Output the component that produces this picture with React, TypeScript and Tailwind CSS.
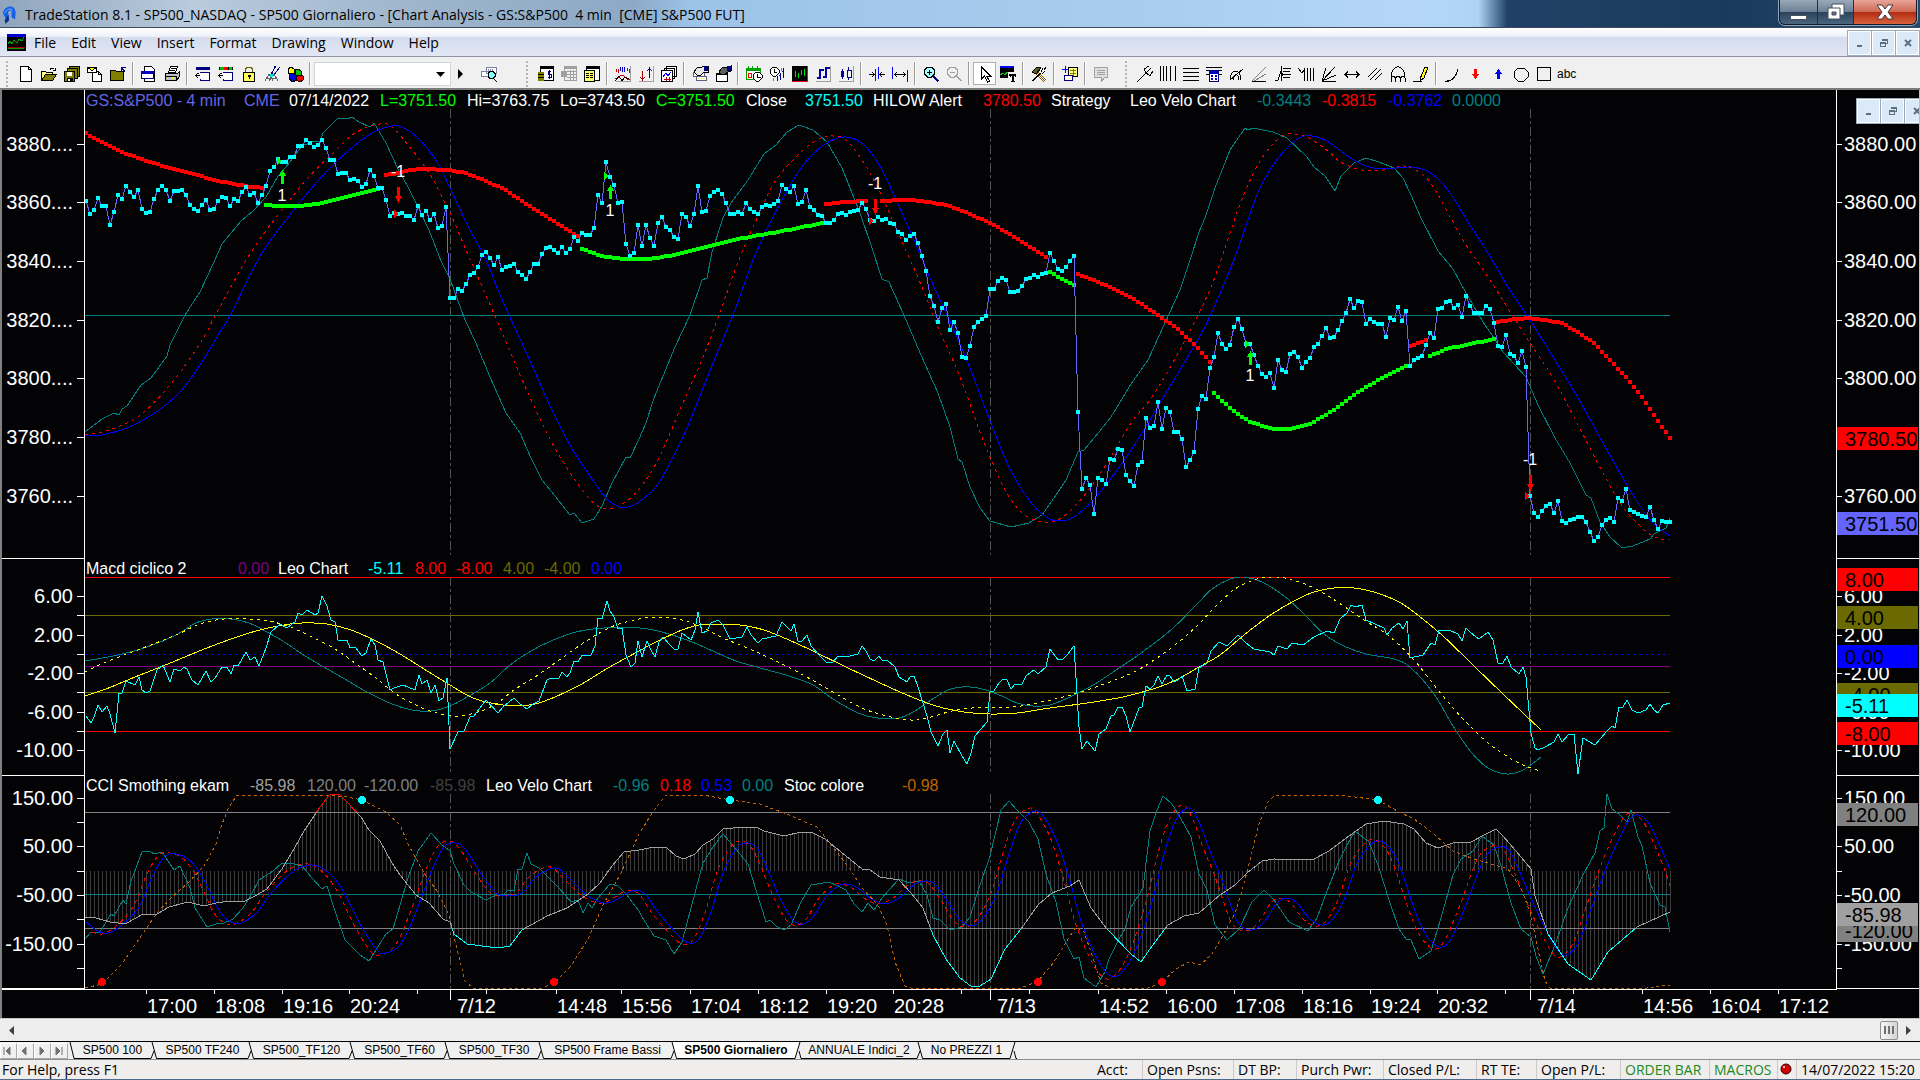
import { useState } from 'react';

// ---------------------------------------------------------------------------
// Icons: 16x16 grids, each layer is [path, fill, stroke]
// ---------------------------------------------------------------------------

type Layer = [string, string, string?];

const N = 'none';
const K = '#000';

const ICONS: Record<string, Layer[]> = {
  new: [['M2.5 .5h8l3 3v12h-11z', '#fff', K], ['M10.5 .5v3h3', N, K]],
  open: [
    ['M.5 14.5v-9h4l1 1h6v2', '#ffff80', K],
    ['M.5 14.5l4-6h11l-4 6z', '#808000', K],
    ['M9 3.5c1-2 3-2 4.500 0M14.500 1.500v3h-3', N, K],
  ],
  saveAll: [
    ['M5.500 .5h10v10h-10z', '#808000', K],
    ['M3.500 2.500h10v10h-10z', '#808000', K],
    ['M.5 5.500h10v10h-10z', '#808000', K],
    ['M3 6h5v4h-5z', '#fff'],
    ['M3 12h6v4h-6z', K],
    ['M4 13h2v2h-2z', '#fff'],
  ],
  mail: [
    ['M5.500 5.500h6l3 3v7h-9z', '#fff', K],
    ['M11.500 5.500v3h3', N, K],
    ['M.5 1.500h9v5h-9z', '#fff', K],
    ['M.5 1.500l4.500 3l4.500-3', '#ffff00', K],
  ],
  folder: [
    ['M.5 14.500v-10h5l1 1h7v9z', '#808000', K],
    ['M15 6l-3-4M11.500 5v-4h4', N, '#000080'],
  ],
  preview: [
    ['M3.500 .5h7l3 3v12h-10z', '#fff', K],
    ['M.5 5.500h12v7h-12z', '#fff', '#000080'],
    ['M1 5h12v3h-12z', '#0000c0'],
  ],
  print: [
    ['M4.500 6.500l2-6h7l-2 6z', '#fff', K],
    ['M7 2.500h5M6 4.500h5', N, K],
    ['M1.500 7.500h12l2-2v5l-3 4h-11z', '#c0c0c0', K],
    ['M1.500 10.500h11v4', N, K],
    ['M8 11h2v2h-2z', '#ffff00'],
  ],
  insertBar: [
    ['M1 1h14v3h-14z', '#000080'],
    ['M5.500 14.500h9v-8h-10M5 14.500v-2', '#fff', '#000080'],
    ['M0 9.500h5M3.500 7l-3 2.500l3 3', N, K],
  ],
  insertStudy: [
    ['M1 1h14v3h-14z', K],
    ['M2 1h4v3h-4zM11 1h3v3h-3z', '#00c000'],
    ['M6 1h4v3h-4z', '#f00'],
    ['M5.500 14.500h9v-8h-10M5 14.500v-2', '#fff', '#000080'],
    ['M0 9.500h5M3.500 7l-3 2.500l3 3', N, K],
  ],
  lock: [
    ['M4.500 7v-4l2-2h3l2 2v4', N, '#606000'],
    ['M2.500 6.500h11v9h-11z', '#ffff60', K],
    ['M7 9h3v2h-1v2h-1v-2h-1z', K],
  ],
  satellite: [
    ['M8 8l3-8M10 9l6-8M7 8l5-8', N, '#000080'],
    ['M1 15l4-7h5l4 7M3 12h9M5 8l4 7M10 8l-5 7', N, '#606060'],
    ['M6 8h3v3h-3z', '#00e0e0'],
  ],
  cubes: [
    ['M1 3l3-2l3 2v4l-3 1l-3-1z', '#ffff00', K],
    ['M8 4l3-1l3 2v4l-6 1z', '#00c000', K],
    ['M2 8l4-1l3 2v5l-3 2l-4-3z', '#0000e0', K],
    ['M9 11l3-2l4 1v4l-3 2l-4-2z', '#f00000', K],
  ],
  find: [
    ['M0 5.500h8v5h-8zM5 1.500h10v6h-10z', '#fff', '#8080a0'],
    ['M7.500 3v3M9.500 3v3M11.500 3v3', N, '#8080a0'],
    ['M7 7.500l2-2h3l2 2v3l-2 2h-3l-2-2z', '#80ffff', K],
    ['M12 12l4 4', N, K],
  ],
  money: [
    ['M2.500 .5h13v14h-13z', '#fff', K],
    ['M2 0h14v3h-14z', K],
    ['M0 6h6v9h-6z', '#808000'],
    ['M0 8.500h6M0 11.500h6', N, K],
    ['M13 5.500h-3v3h3v3h-3M11.500 4v9', N, '#000080'],
  ],
  greyTable: [
    ['M3 0h13v3h-13zM0 5h6v6h-6z', '#a0a0a0'],
    ['M3.500 .5h12v14h-12zM6 5.500h9M6 8.500h9M6 11.500h9M9.500 4v10M12.500 4v10', N, '#a0a0a0'],
  ],
  table: [
    ['M2.500 .5h13v14h-13z', '#fff', K],
    ['M2 0h14v3h-14z', K],
    ['M.5 4.500h10v11h-10z', '#ffff60', K],
    ['M2 7.500h3M6 7.500h3M2 9.500h3M6 9.500h3M2 11.500h3M6 11.500h3', N, K],
  ],
  oscillator: [
    ['M15.500 0v15.500h-15', N, '#a0a0a0'],
    ['M1.500 6v-3M3.500 7v-4M12.500 5v-3M14.500 7v-4', N, '#c00000'],
    ['M5.500 5v-4M7.500 6v-5M9.500 6v-5', N, '#0000c0'],
    ['M0 13l3-1l3-3l3 1l3 3h3', N, '#c00000'],
    ['M0 15l4-5l3 5l3-4l4 2', N, K],
  ],
  upDown: [
    ['M15.500 0v15.500h-15', N, '#a0a0a0'],
    ['M4.500 5v9M2.500 11l2 3l2-3', N, '#a00000'],
    ['M11.500 12v-10M9.500 5l2-3l2 3', N, '#000080'],
  ],
  charts: [
    ['M5.500 .5h10v10h-10zM3.500 2.500h10v10h-10z', '#fff', K],
    ['M.5 4.500h11v11h-11z', '#fff', K],
    ['M2 11l3-4l2 3l3-4', N, '#0000ff'],
    ['M5.500 11v4M8.500 11v4M3 13.500h7', N, '#c00000'],
  ],
  handBar: [
    ['M1.500 6.500h11v4h-11zM4.500 10.500h10v4h-10z', '#fff', '#606080'],
    ['M2 6l3-4l5-1l4-1h2v6h-4l-3 3h-4z', '#e8e8e8', K],
    ['M12 0h4v5h-4z', '#000080'],
    ['M5 12h8v1h-8z', '#ffff80'],
  ],
  handPage: [
    ['M1.500 7.500h11v8h-11z', '#fff', K],
    ['M1 7h12v2h-12z', K],
    ['M4 6l3-4l5-1l4-1v5l-3 1l-3 2h-4z', '#606060', K],
    ['M12 0h4v5h-4z', '#000080'],
  ],
  calendar: [
    ['M.5 2.500h14v11h-14z', '#fff', '#00a000'],
    ['M0 2h15v3h-15zM2 0h1v3h-1zM6 0h1v3h-1zM11 0h1v3h-1z', '#00a000'],
    ['M2 7h3v4h-3z', N, '#f00'],
    ['M7 9l3-3h3l3 3v3l-3 3h-3l-3-3z', '#fff', K],
    ['M11.500 8v3h3', N, K],
  ],
  clockBars: [
    ['M1 4l3-3h3l3 3v3l-3 3h-3l-3-3z', '#fff', K],
    ['M5.500 3v3h2', N, K],
    ['M8.500 10v5M11.500 7v7M14.500 2v10M10 9.500h2M13 5.500h2', N, '#0000a0'],
    ['M4.500 12v3M12.500 2v3', N, '#808080'],
  ],
  blackChart: [
    ['M0 0h16v16h-16z', K],
    ['M0 15.500h16M15.500 0v16', N, '#f00'],
    ['M3.500 5v6M6.500 7v5M9.500 4v5M12.500 3v7', N, '#00e000'],
  ],
  ohlc: [
    ['M15.500 0v15.500h-15', N, '#a0a0a0'],
    ['M4 3h2v10h-2zM2 11h2v2h-2zM6 3h3v2h-3zM10 1h2v11h-2zM8 10h2v2h-2zM12 1h3v2h-3z', '#0000a0'],
  ],
  candle: [
    ['M15.500 0v15.500h-15', N, '#a0a0a0'],
    ['M3 5h3v6h-3z', '#0000a0'],
    ['M4.500 3v10M10.500 1v3M10.500 11v3M9 4h4v7h-4z', N, '#0000a0'],
  ],
  squeeze: [
    ['M0 8.500h5M3 6l2.500 2.500l-2.500 2.500M16 8.500h-5M13 6l-2.500 2.500l2.500 2.500', N, K],
    ['M6.500 3v12M9.500 1v12', N, '#0000ff'],
  ],
  expand: [
    ['M3 8.500h11M5 6l-2.500 2.500l2.500 2.500M11 6l2.500 2.500l-2.500 2.500', N, K],
    ['M.5 1v12M15.500 4v12', N, '#0000ff'],
  ],
  zoomIn: [
    ['M1.500 4l3-3h4l3 3v4l-3 3h-4l-3-3z', '#a0ffff', K],
    ['M6.500 3.500v5M4 6h5', N, K],
    ['M10 10l5 5M11 10l5 5M10 11l5 5', N, '#000080'],
  ],
  zoomOut: [
    ['M1.500 4l3-3h4l3 3v4l-3 3h-4l-3-3z', N, '#a0a0a0'],
    ['M4 6.500h5M10 10l5 5M11 10l5 5', N, '#a0a0a0'],
  ],
  pointer: [['M4.500 1v12l3-3l3 6l2-1l-3-5h4z', '#fff', K]],
  chartText: [
    ['M0 1h14v11h-14z', K],
    ['M0 0h14v2h-14z', '#0000ff'],
    ['M0 9l3-2l2 2l2-3l3 2', N, '#00d000'],
    ['M8 6h8v10h-8z', '#f0f0f0'],
    ['M9 8h7v3h-1v-1h-1v5h1v1h-4v-1h1v-5h-1v1h-1z', K],
  ],
  tools: [
    ['M14 15l-9-9M13 16l-9-9M15 14l-9-9', N, '#806000'],
    ['M1 6l5-5l4 1l-5 6z', '#606020', K],
    ['M1 15l8-8M2 15l8-8M10 6l2-4M14 5l-3 3M15 1l-2 3', N, K],
  ],
  addWindow: [
    ['M3.500 0v7M0 3.500h7', N, '#0000ff'],
    ['M6.500 1.500h9v9h-9z', '#ffff80', K],
    ['M8 4.500h6M8 7.500h6M11.500 3v7', N, '#808000'],
    ['M2.500 9.500h8v5h-8z', '#fff', '#000080'],
  ],
  note: [
    ['M1.500 1.500h13v10h-3l-3 4v-4h-7z', '#e0e0e0', '#a0a0a0'],
    ['M4 4.500h8M4 6.500h8M4 8.500h8', N, '#a0a0a0'],
  ],
  pitchfork: [['M0 16l9-9M9 7l-2-4l5-3M9 7l4 3l3-5M4 12l10-10', N, K]],
  vLines: [['M.5 0v15M3.500 0v15M6.500 0v15M10.500 0v15M15.500 0v15', N, K]],
  hLines: [['M0 2.500h16M0 6.500h16M0 10.500h16M0 14.500h16', N, K]],
  calc: [
    ['M0 1.500h16M0 4.500h16M0 8.500h16', N, K],
    ['M3.500 4.500h9v11h-9z', '#fff', '#000080'],
    ['M4 5h8v3h-8zM5 9h2v2h-2zM9 9h2v2h-2zM5 12h2v2h-2zM9 12h2v2h-2z', '#0000c0'],
  ],
  arcs: [['M1 14c0-12 11-12 11 0M4 14c0-7 6-7 6 0M1 14l13-11', N, K]],
  fanDots: [['M0 15.500h14', N, K], ['M0 15l14-14M2 15l12-7', N, '#808080']],
  retrace: [['M0 15l3-1l3-9l2 5M6.500 0v15M8 2.500h8M8 5.500h7M8 8.500h8M8 11.500h7', N, K]],
  timeLines: [['M0 2l4 5l3-4M6.500 2v13M9.500 2v13M12.500 2v13M15.500 2v13', N, K]],
  fan: [['M1 15.500h14M1 15l13-14M1 15l14-6M1 15l4-13', N, K]],
  hArrow: [['M1 8.500h14M4 5.500l-3 3l3 3M12 5.500l3 3l-3 3', N, K]],
  channel: [['M1 11l9-9M3 14l11-11M8 14l7-7', N, K]],
  cycles: [['M1 12c0-15 14-15 14 0M1 16v-4c2-2 4-2 4 0v4M5 12c2-2 5-2 5 0v4M10 12c2-2 5-2 5 0v4', N, K]],
  pencil: [['M7 13l5-12h3l-4 11l-4 3z', '#ffff00', K], ['M0 15.500h9', N, K]],
  curve: [['M3 15c5 0 10-5 11-12M1 15h4', N, K]],
  down: [['M7 3h3v5h2l-3.500 5l-3.500-5h2z', '#ff0000']],
  up: [['M7 13h3v-5h2l-3.500-5l-3.500 5h2z', '#0000ff']],
  circle: [['M1 6l4-4h6l4 4v5l-4 4h-6l-4-4z', N, K]],
  rect: [['M1.500 1.500h13v13h-13z', N, K]],
};

function Icon({ name }: { name: string }) {
  return (
    <svg viewBox="0 0 16 16" className="h-4 w-4 overflow-visible" shapeRendering="crispEdges" aria-hidden="true">
      {ICONS[name].map(([d, fill, stroke], i) => (
        <path key={i} d={d} fill={fill} stroke={stroke ?? 'none'} />
      ))}
    </svg>
  );
}

function ToolButton({ name, active }: { name: string; active?: boolean }) {
  return (
    <button
      aria-label={name}
      className={
        active
          ? 'flex h-[23px] w-[23px] shrink-0 items-center justify-center border border-[#b0b0b0] bg-white'
          : 'flex h-[23px] w-[23px] shrink-0 items-center justify-center'
      }
    >
      <Icon name={name} />
    </button>
  );
}

const Sep = () => <span className="mx-[3px] h-[23px] w-0.5 shrink-0 border-l border-[#9a9a9a] bg-white" />;
const Grip = () => <span className="mr-1 h-[26px] w-1 shrink-0 border-l-2 border-dotted border-[#b4b4b4]" />;

function ToolGroup({ items }: { items: string[] }) {
  return (
    <>
      {items.map((name, i) =>
        name === '|' ? <Sep key={i} /> : <ToolButton key={i} name={name} active={name === 'pointer'} />
      )}
    </>
  );
}

const FILE_TOOLS = ['new', 'open', 'saveAll', 'mail', 'folder', '|', 'preview', 'print', '|', 'insertBar', 'insertStudy', 'lock', 'satellite', 'cubes', '|'];
const CHART_TOOLS = [
  'money', 'greyTable', 'table', '|', 'oscillator', 'upDown', 'charts', '|', 'handBar', 'handPage', '|',
  'calendar', 'clockBars', 'blackChart', 'ohlc', 'candle', '|', 'squeeze', 'expand', '|', 'zoomIn', 'zoomOut', '|',
  'pointer', 'chartText', '|', 'tools', '|', 'addWindow', '|', 'note',
];
const DRAW_TOOLS = [
  'pitchfork', 'vLines', 'hLines', 'calc', 'arcs', 'fanDots', 'retrace', 'timeLines', 'fan', 'hArrow', 'channel',
  'cycles', 'pencil', '|', 'curve', 'down', 'up', 'circle', 'rect',
];

// ---------------------------------------------------------------------------
// Chart data
// ---------------------------------------------------------------------------

const FIRST_X = 86;
const BAR = 4;

const CLOSES = [
  111, 124, 120, 108, 116, 116, 135, 122, 105, 109, 96, 102, 107, 100, 119, 123, 122, 109, 100, 96,
  100, 111, 101, 101, 100, 105, 115, 119, 121, 115, 110, 120, 119, 111, 107, 108, 116, 109, 111, 102,
  97, 105, 103, 113, 105, 96, 81, 77, 69, 72, 72, 67, 67, 56, 56, 50, 53, 57, 55, 50,
  58, 70, 70, 84, 83, 83, 90, 89, 91, 97, 94, 80, 86, 98, 98, 110, 126, 123, 124, 123,
  126, 126, 130, 116, 125, 121, 130, 124, 138, 136, 117, 208, 208, 199, 201, 194, 185, 183, 177, 165,
  162, 168, 175, 167, 180, 177, 176, 174, 182, 185, 189, 182, 174, 174, 164, 158, 157, 160, 163, 157,
  163, 159, 147, 151, 143, 145, 145, 138, 105, 113, 72, 87, 95, 113, 112, 154, 166, 163, 135, 156,
  135, 148, 156, 133, 127, 137, 140, 147, 149, 124, 127, 136, 124, 96, 122, 121, 106, 102, 100, 104,
  113, 124, 124, 122, 124, 113, 119, 122, 124, 117, 115, 116, 114, 111, 95, 99, 102, 96, 114, 112,
  100, 117, 120, 125, 126, 133, 133, 130, 124, 123, 125, 122, 121, 120, 113, 119, 130, 131, 127, 130,
  129, 133, 134, 142, 144, 150, 146, 144, 153, 166, 181, 206, 216, 232, 218, 214, 240, 232, 243, 267,
  268, 256, 237, 232, 229, 226, 199, 199, 191, 188, 190, 202, 202, 201, 196, 189, 188, 185, 187, 184,
  183, 163, 171, 179, 181, 177, 171, 166, 322, 399, 388, 395, 424, 388, 390, 394, 369, 370, 359, 360,
  385, 391, 396, 375, 372, 328, 338, 336, 312, 339, 318, 322, 342, 342, 349, 377, 370, 362, 319, 306,
  309, 278, 267, 243, 254, 259, 255, 237, 229, 239, 254, 254, 265, 276, 284, 287, 283, 298, 270, 280,
  282, 264, 262, 267, 278, 272, 268, 257, 254, 246, 238, 248, 247, 240, 231, 223, 209, 218, 211, 212,
  234, 229, 232, 234, 234, 247, 228, 230, 217, 231, 221, 276, 270, 268, 266, 255, 243, 248, 219, 218,
  212, 211, 218, 215, 227, 206, 216, 223, 223, 223, 216, 219, 233, 256, 257, 245, 264, 266, 273, 261,
  277, 406, 423, 427, 421, 416, 414, 423, 411, 431, 433, 430, 429, 427, 427, 432, 442, 451, 447, 435,
  430, 428, 432, 408, 411, 399, 420, 422, 424, 426, 427, 417, 430, 439, 431, 432, 432,
];

const HILOW_RED = [
  '86,43 94,48 114,58 127,64 147,71 163,76 186,82 204,87 224,92 245,96 264,98',
  '386,85 398,83 410,80 424,79 450,80 466,83 486,91 506,100 526,114 546,126 570,141 578,146',
  '826,114 842,112 866,111',
  '882,111 898,110 914,110 930,112 946,115 966,122 990,133 1010,144 1026,154 1046,167',
  '1078,184 1094,190 1114,199 1134,209 1158,225 1178,239 1198,258 1210,272',
  '1410,256 1426,250',
  '1498,232 1514,229 1530,228 1546,230 1562,233 1578,242 1594,253 1610,270 1626,287 1642,307 1658,331 1670,348',
];
const HILOW_GREEN = [
  '266,115 282,116 298,116 322,113 350,106 378,99',
  '582,159 602,166 622,169 642,169 658,168 682,163 710,156 738,149 766,144 798,138 822,133',
  '1050,182 1062,189 1074,195',
  '1214,303 1222,311 1234,321 1250,332 1274,339 1290,339 1310,334 1334,320 1358,302 1382,288 1406,276',
  '1430,266 1446,259 1466,255 1494,249',
];

const VELO_TEAL =
  '85,342 102,329 114,323 119,325 122,319 127,316 141,295 151,288 167,266 170,255 185,225 200,202 214,172 222,154 231,143 241,131 253,121 266,107 278,86 286,77 302,56 314,51 320,52 323,43 338,28 347,29 352,27 359,32 370,37 374,33 386,53 398,79 408,97 418,117 429,140 441,171 450,189 465,230 476,253 490,287 506,323 520,343 531,368 542,390 555,406 570,425 574,423 582,433 594,429 602,416 612,393 626,367 630,368 639,349 646,333 654,308 675,257 690,225 702,190 707,188 712,162 723,128 731,113 748,90 764,64 776,55 787,42 799,35 813,40 827,52 842,78 860,123 872,158 882,189 889,192 903,223 921,265 938,303 950,337 958,369 962,372 970,397 980,418 990,431 1011,437 1029,433 1042,425 1056,405 1066,390 1078,362 1084,360 1099,342 1111,327 1131,294 1148,270 1164,235 1180,200 1191,167 1199,142 1205,128 1215,98 1230,60 1245,38 1248,40 1253,38 1273,42 1287,48 1307,67 1314,77 1325,86 1335,101 1341,86 1354,73 1366,68 1379,72 1394,78 1403,88 1411,105 1421,128 1438,161 1453,179 1466,203 1483,232 1494,248 1503,262 1526,287 1538,315 1555,348 1570,373 1586,405 1591,408 1600,432 1610,447 1622,458 1633,456 1650,449 1654,444 1666,438 1670,428';
const VELO_BLUE =
  '85,346 102,345 127,338 143,330 159,320 180,302 200,275 220,242 231,224 249,187 265,158 286,130 310,100 335,73 359,52 376,41 392,36 402,37 418,48 437,72 450,98 469,138 486,170 498,200 509,225 531,273 551,318 571,357 588,383 606,408 620,417 631,416 639,412 656,397 670,373 687,338 711,278 733,225 756,163 782,110 801,78 821,57 838,48 852,48 866,57 882,80 911,143 931,190 948,227 968,273 989,328 1009,377 1029,410 1046,427 1060,431 1074,427 1095,408 1123,372 1148,333 1172,293 1199,248 1212,222 1235,167 1259,100 1279,67 1299,48 1312,46 1327,51 1349,67 1366,76 1384,79 1411,77 1429,82 1448,100 1468,132 1488,163 1508,197 1528,227 1553,267 1578,308 1608,362 1633,405 1652,432 1670,446';
const VELO_RED =
  '85,345 106,341 127,333 143,323 163,303 184,277 204,247 216,224 245,172 265,142 286,115 306,90 331,65 355,43 380,34 392,37 408,55 429,83 450,123 469,167 495,226 518,280 539,327 559,365 580,397 596,415 610,419 624,413 639,399 658,370 682,315 703,267 719,225 740,167 760,122 776,90 801,62 821,48 833,46 846,50 862,70 880,102 899,145 919,190 938,237 960,287 980,342 990,367 1005,400 1021,422 1038,431 1052,432 1068,423 1087,402 1107,373 1131,333 1152,307 1176,267 1199,223 1215,187 1239,117 1259,73 1279,48 1294,44 1309,48 1329,62 1339,71 1354,78 1371,81 1389,79 1404,76 1419,82 1434,98 1463,150 1488,187 1511,223 1528,250 1553,288 1578,335 1603,383 1623,417 1642,438 1657,448 1670,450';

const MACD_CYAN =
  '86,166 91,173 94,167 98,155 102,162 107,156 110,164 115,183 119,143 122,143 126,131 135,135 139,127 142,140 146,143 150,141 157,120 163,115 170,132 174,119 180,121 184,117 187,119 192,130 198,135 206,121 211,132 215,128 222,117 227,117 231,124 234,115 238,116 246,102 250,110 255,107 259,116 266,98 271,82 280,74 287,78 295,72 298,63 302,65 307,60 315,65 318,63 322,46 327,56 331,70 335,72 338,90 347,90 350,98 355,97 362,106 366,103 371,89 375,95 378,110 383,112 390,140 394,138 403,135 415,140 419,125 422,134 427,130 431,143 435,135 439,151 443,148 447,128 450,199 458,182 464,181 470,167 474,166 486,150 498,163 504,156 514,148 520,154 527,159 533,154 539,151 547,130 551,128 559,128 562,122 567,127 570,123 574,111 578,112 582,105 591,105 595,96 598,68 602,69 607,51 610,61 614,67 618,79 622,78 626,105 631,117 635,113 638,91 642,107 647,91 651,100 655,107 659,92 663,87 670,95 674,99 678,99 682,83 691,90 695,80 698,62 702,83 707,81 711,73 718,70 723,75 730,89 742,87 747,77 751,85 758,93 762,89 776,86 782,72 791,81 794,74 798,91 802,91 807,85 811,96 819,105 826,112 833,112 838,106 846,107 858,104 862,96 866,101 870,109 874,111 879,106 882,110 887,110 895,117 899,127 907,132 910,127 914,126 918,137 927,166 931,182 938,196 943,184 947,180 950,203 954,191 962,206 967,214 971,203 975,186 987,172 990,142 994,141 999,133 1003,129 1007,130 1011,139 1015,134 1022,134 1026,126 1034,120 1038,124 1046,117 1050,99 1058,110 1063,109 1068,104 1074,96 1077,144 1079,177 1082,199 1087,191 1095,201 1099,184 1106,179 1111,166 1114,165 1118,157 1122,157 1126,166 1130,182 1139,158 1142,157 1146,136 1150,139 1154,135 1158,126 1162,134 1167,125 1170,126 1174,132 1178,130 1182,126 1187,141 1195,139 1199,118 1207,113 1211,101 1219,92 1227,96 1238,85 1246,93 1254,99 1270,102 1274,105 1278,96 1287,99 1292,93 1303,95 1314,87 1327,81 1334,83 1340,69 1347,63 1351,55 1355,57 1362,55 1366,70 1384,78 1387,85 1392,78 1399,73 1403,79 1407,71 1410,108 1423,105 1431,93 1435,95 1439,80 1449,80 1458,84 1462,91 1466,78 1471,83 1479,89 1488,82 1493,90 1498,113 1503,113 1507,106 1511,117 1519,124 1523,117 1526,127 1531,183 1535,198 1538,200 1545,197 1554,192 1558,184 1562,192 1569,184 1574,184 1578,224 1583,188 1595,195 1607,181 1612,176 1615,178 1619,157 1623,157 1627,150 1632,160 1638,163 1646,160 1650,154 1654,160 1658,163 1663,155 1670,153';
const MACD_YELLOW =
  '85,146 106,139 135,127 163,116 192,104 220,93 249,83 278,76 302,73 327,74 351,80 376,91 400,104 424,119 450,135 473,148 496,154 518,156 535,154 555,147 580,135 608,118 639,101 658,91 682,80 699,75 719,74 740,75 764,80 789,90 813,101 846,117 878,132 907,145 936,156 964,162 990,164 1017,163 1050,158 1087,153 1123,147 1156,138 1176,130 1199,117 1220,105 1244,85 1269,66 1294,51 1314,42 1334,38 1354,38 1374,42 1399,52 1419,66 1443,86 1473,115 1503,144 1541,180';
const MACD_YELLOW_DASH =
  '85,122 106,112 143,98 176,85 200,74 224,69 249,69 269,71 290,77 310,86 335,99 355,113 376,128 396,144 420,157 441,164 459,166 478,162 496,154 514,140 535,127 555,113 576,98 596,85 616,75 639,69 658,67 678,69 699,76 723,88 752,100 780,113 805,126 833,142 862,158 887,166 911,170 927,168 952,161 972,158 1013,157 1046,151 1074,144 1107,133 1136,121 1160,106 1180,91 1199,74 1215,57 1235,39 1254,30 1272,27 1289,29 1314,38 1339,53 1364,70 1389,86 1414,110 1438,140 1463,169 1488,193 1513,210 1531,218 1540,221';
const MACD_TEAL =
  '85,111 118,105 147,97 176,85 196,73 212,69 231,69 249,73 269,83 286,93 302,104 322,116 343,128 367,142 392,154 412,160 431,161 450,156 469,146 490,133 510,115 531,101 551,91 576,82 604,78 640,78 662,82 687,90 715,102 736,111 764,119 789,126 813,135 833,149 858,163 878,168 899,168 915,161 931,150 948,140 962,137 978,138 997,144 1017,153 1033,156 1050,155 1070,147 1095,134 1119,118 1144,101 1172,79 1199,52 1212,39 1230,29 1244,27 1262,32 1284,46 1304,64 1324,84 1344,96 1366,104 1394,109 1411,118 1434,144 1453,176 1471,202 1488,218 1507,224 1523,220 1541,207';

const CCI =
  '85,367 96,368 110,372 118,373 127,373 143,364 157,364 169,357 188,352 204,356 216,353 231,351 243,352 255,346 267,339 278,324 282,319 294,299 304,281 318,260 330,244 339,244 347,252 361,267 369,280 380,291 392,313 400,325 416,345 429,353 443,369 450,372 454,384 467,394 482,396 498,398 510,396 522,380 547,366 567,358 588,344 600,333 612,316 624,302 639,300 654,297 667,298 676,306 684,309 695,304 703,295 713,289 723,279 744,277 756,277 764,281 784,286 801,282 813,283 825,289 846,306 862,319 870,320 880,327 899,330 911,343 923,358 933,385 946,409 960,428 972,437 980,436 991,429 1005,399 1021,379 1038,355 1052,343 1070,336 1079,330 1091,358 1107,379 1131,404 1141,412 1152,396 1168,375 1184,366 1199,363 1220,345 1235,335 1247,323 1262,311 1274,309 1312,310 1329,301 1349,286 1366,274 1384,271 1404,274 1414,279 1426,293 1438,298 1453,293 1471,292 1486,284 1496,279 1503,286 1516,301 1531,319 1535,346 1548,384 1568,414 1591,430 1608,402 1637,377 1670,362';
const CCI_TEAL =
  '85,389 91,382 100,382 111,364 114,366 123,350 126,354 131,331 142,302 150,301 154,304 162,302 174,320 180,316 190,338 195,358 207,377 216,374 224,373 233,369 243,358 251,345 259,330 273,321 282,313 290,313 302,316 312,328 322,339 327,336 333,355 345,390 360,405 369,411 386,384 393,379 408,328 418,301 431,283 441,294 450,301 454,314 464,335 471,342 486,350 496,345 503,345 508,340 514,341 518,319 522,319 527,303 531,314 539,318 549,328 559,338 571,352 578,350 583,363 588,353 592,358 598,348 610,334 618,336 627,345 639,361 642,367 654,386 666,390 674,404 682,392 691,358 703,313 713,297 723,284 736,299 748,314 756,340 766,372 770,370 776,376 784,380 791,375 801,352 811,335 829,332 838,336 846,340 854,354 862,362 868,353 874,360 882,348 889,340 899,329 909,333 919,331 927,345 933,368 940,370 950,380 962,377 970,367 978,341 990,306 1001,260 1009,251 1017,260 1029,272 1038,289 1046,324 1056,352 1064,389 1074,409 1079,407 1084,428 1096,437 1105,422 1109,409 1119,389 1125,379 1131,357 1143,338 1150,281 1157,260 1163,246 1172,254 1180,267 1191,287 1199,324 1207,340 1215,375 1227,390 1239,379 1252,352 1264,340 1274,350 1289,372 1308,381 1317,368 1327,341 1339,311 1346,297 1355,281 1369,292 1379,318 1389,350 1399,379 1406,389 1411,390 1419,409 1431,401 1441,368 1453,325 1461,309 1473,301 1482,286 1494,295 1501,316 1511,353 1521,379 1531,387 1536,406 1543,424 1555,395 1568,358 1583,325 1595,303 1600,281 1604,278 1607,244 1612,259 1619,264 1627,272 1631,260 1638,287 1642,296 1650,333 1660,355 1665,357 1670,382';
const CCI_BLUE =
  '85,371 98,381 108,383 122,375 139,357 153,325 165,306 176,304 188,309 198,320 208,338 220,362 231,372 241,373 257,362 273,341 294,321 310,315 322,318 335,329 347,348 359,372 376,399 385,403 400,395 412,372 424,341 435,313 445,296 455,293 465,299 482,325 496,343 508,346 522,343 535,328 549,319 559,319 571,330 588,346 604,353 616,350 631,341 639,341 646,345 658,362 678,385 689,393 699,389 711,362 723,323 736,299 746,293 756,297 764,311 780,348 793,370 803,374 813,367 825,348 838,336 846,334 858,338 870,348 884,354 899,348 915,334 927,331 936,335 948,352 960,370 972,376 984,367 997,343 1009,304 1021,272 1036,261 1046,270 1058,294 1070,331 1082,374 1099,412 1113,427 1127,416 1140,389 1154,345 1164,304 1176,270 1189,258 1199,272 1210,301 1220,325 1230,353 1239,374 1252,380 1264,372 1277,353 1287,348 1297,353 1309,368 1322,375 1332,370 1344,350 1356,316 1369,296 1379,291 1389,297 1399,314 1414,358 1426,385 1440,397 1451,389 1466,355 1483,311 1496,298 1508,299 1518,318 1531,348 1548,384 1563,405 1578,394 1590,362 1605,321 1618,291 1630,269 1638,265 1648,272 1657,289 1670,319';
const STOC =
  '85,438 102,434 122,414 139,389 157,363 171,348 188,333 204,316 216,294 222,274 229,257 237,245 322,245 347,247 362,250 386,262 400,275 408,294 424,323 437,341 449,365 457,399 465,431 473,438 543,438 554,433 571,416 588,389 604,353 620,325 639,284 654,260 666,245 703,245 730,250 760,254 789,265 817,277 833,297 850,319 862,338 878,355 887,375 895,412 905,436 911,438 1021,438 1038,431 1054,412 1066,392 1076,377 1084,382 1091,402 1101,433 1111,438 1148,438 1162,432 1176,419 1189,412 1200,415 1212,404 1222,387 1235,363 1242,341 1249,314 1259,274 1268,252 1275,245 1339,245 1378,250 1399,262 1414,269 1434,284 1453,301 1471,308 1488,313 1508,319 1521,338 1531,365 1538,399 1545,431 1550,438 1647,438 1670,435';

type Pt = [number, number];

const parse = (s: string): Pt[] => s.split(' ').map((p) => p.split(',').map(Number) as Pt);

// Catmull-Rom through all the points
function smooth(pts: Pt[]) {
  let d = `M${pts[0][0]} ${pts[0][1]}`;
  for (let i = 0; i < pts.length - 1; i++) {
    const a = pts[Math.max(0, i - 1)];
    const b = pts[i];
    const c = pts[i + 1];
    const e = pts[Math.min(pts.length - 1, i + 2)];
    d += `C${b[0] + (c[0] - a[0]) / 6} ${b[1] + (c[1] - a[1]) / 6} ${c[0] - (e[0] - b[0]) / 6} ${c[1] - (e[1] - b[1]) / 6} ${c[0]} ${c[1]}`;
  }
  return d;
}

const line = (pts: Pt[]) => 'M' + pts.map((p) => p.join(' ')).join('L');

// value of a polyline at every bar between its ends
function perBar(pts: Pt[]): Pt[] {
  const out: Pt[] = [];
  let k = 0;
  for (let x = Math.ceil((pts[0][0] - FIRST_X) / BAR) * BAR + FIRST_X; x <= pts[pts.length - 1][0]; x += BAR) {
    while (k < pts.length - 2 && pts[k + 1][0] < x) k++;
    const [x0, y0] = pts[k];
    const [x1, y1] = pts[k + 1];
    out.push([x, Math.round(y0 + ((y1 - y0) * (x - x0)) / (x1 - x0))]);
  }
  return out;
}

const dots = (pts: Pt[]) => pts.map(([x, y]) => `M${x} ${y}h.01`).join('');

const closePts: Pt[] = CLOSES.map((y, i) => [FIRST_X + i * BAR, y]);
const cciBars = perBar(parse(CCI)).map(([x, y]) => `M${x} 321V${y}`).join('');
const cciRed: Pt[] = parse(CCI_BLUE)
  .map(([x, y]): Pt => [x - 6, Math.round(345 + (y - 345) * 1.03)])
  .filter(([x]) => x >= 85);
cciRed.push([1670, 336]);

const SESSIONS = [450, 990, 1530];

// ---------------------------------------------------------------------------
// Chart pieces
// ---------------------------------------------------------------------------

function Stroke({ d, color, dash, width = 1 }: { d: string; color: string; dash?: string; width?: number }) {
  return (
    <path
      d={d}
      fill="none"
      stroke={color}
      strokeWidth={width}
      strokeDasharray={dash}
      strokeLinecap={width > 1 ? 'square' : 'butt'}
      vectorEffect="non-scaling-stroke"
    />
  );
}

function Plot({ top, bottom, children }: { top: number; bottom: number; children: React.ReactNode }) {
  return (
    <svg
      viewBox={`85 ${top} 1751 ${bottom - top}`}
      preserveAspectRatio="none"
      className="h-0 w-full flex-1"
      shapeRendering="crispEdges"
    >
      {children}
    </svg>
  );
}

function Sessions({ top, bottom }: { top: number; bottom: number }) {
  return (
    <>
      {SESSIONS.map((x) => (
        <Stroke key={x} d={`M${x + 0.5} ${top}V${bottom}`} color="#505050" dash="9 3 3 3" />
      ))}
    </>
  );
}

type LegendItem = [string, string, string];

function Legend({ items }: { items: LegendItem[] }) {
  return (
    <div className="flex h-[18px] shrink-0 items-end overflow-hidden pl-px text-base leading-4 whitespace-pre">
      {items.map(([text, width, color], i) => (
        <span key={i} className={`shrink-0 ${width} ${color}`}>
          {text}
        </span>
      ))}
    </div>
  );
}

const PRICE_LEGEND: LegendItem[] = [
  ['GS:S&P500 - 4 min', 'w-[158px]', 'text-[#6464e6]'],
  ['CME', 'w-[45px]', 'text-[#6464e6]'],
  ['07/14/2022', 'w-[91px]', 'text-white'],
  ['L=3751.50', 'w-[87px]', 'text-[#00ff00]'],
  ['Hi=3763.75', 'w-[93px]', 'text-white'],
  ['Lo=3743.50', 'w-24', 'text-white'],
  ['C=3751.50', 'w-[90px]', 'text-[#00ff00]'],
  ['Close', 'w-[59px]', 'text-white'],
  ['3751.50', 'w-[68px]', 'text-[#00ffff]'],
  ['HILOW Alert', 'w-[110px]', 'text-white'],
  ['3780.50', 'w-[68px]', 'text-[#ff0000]'],
  ['Strategy', 'w-[79px]', 'text-white'],
  ['Leo Velo Chart', 'w-[127px]', 'text-white'],
  ['-0.3443', 'w-[65px]', 'text-[#008080]'],
  ['-0.3815', 'w-[66px]', 'text-[#ff0000]'],
  ['-0.3762', 'w-16', 'text-[#0000ff]'],
  ['0.0000', 'w-16', 'text-[#008080]'],
];
const MACD_LEGEND: LegendItem[] = [
  ['Macd ciclico 2', 'w-[152px]', 'text-white'],
  ['0.00', 'w-10', 'text-[#800080]'],
  ['Leo Chart', 'w-[90px]', 'text-white'],
  ['-5.11', 'w-[47px]', 'text-[#00ffff]'],
  ['8.00', 'w-[41px]', 'text-[#ff0000]'],
  ['-8.00', 'w-[47px]', 'text-[#ff0000]'],
  ['4.00', 'w-[41px]', 'text-[#6a6a00]'],
  ['-4.00', 'w-[47px]', 'text-[#6a6a00]'],
  ['0.00', 'w-[41px]', 'text-[#0000ff]'],
];
const CCI_LEGEND: LegendItem[] = [
  ['CCI Smothing ekam', 'w-[164px]', 'text-white'],
  ['-85.98', 'w-[57px]', 'text-[#a0a0a0]'],
  ['120.00', 'w-[57px]', 'text-[#808080]'],
  ['-120.00', 'w-[66px]', 'text-[#808080]'],
  ['-85.98', 'w-14', 'text-[#404040]'],
  ['Leo Velo Chart', 'w-[127px]', 'text-white'],
  ['-0.96', 'w-[47px]', 'text-[#008080]'],
  ['0.18', 'w-[41px]', 'text-[#ff0000]'],
  ['0.53', 'w-[41px]', 'text-[#0000ff]'],
  ['0.00', 'w-[42px]', 'text-[#008080]'],
  ['Stoc colore', 'w-[118px]', 'text-white'],
  ['-0.98', 'w-[47px]', 'text-[#c06400]'],
];

// [y, label]; an empty label is a bare tick
type Tick = [number, string];
type Tag = [number, string, string];

function LeftAxis({ top, bottom, ticks }: { top: number; bottom: number; ticks: Tick[] }) {
  return (
    <div className="flex flex-col overflow-hidden border-r border-b border-white">
      <svg viewBox={`2 ${top} 82 ${bottom - top}`} preserveAspectRatio="none" className="h-0 w-full flex-1">
        {ticks.map(([y, label]) => (
          <g key={y}>
            <path d={`M77 ${y + 0.5}h7`} stroke="#fff" shapeRendering="crispEdges" />
            <text x="73" y={y + 7} textAnchor="end" fontSize="20" fill="#fff">
              {label}
            </text>
          </g>
        ))}
      </svg>
    </div>
  );
}

function RightAxis({ top, bottom, ticks, tags }: { top: number; bottom: number; ticks: Tick[]; tags: Tag[] }) {
  return (
    <div className="flex flex-col overflow-hidden border-b border-l border-white">
      <svg viewBox={`1837 ${top} 82 ${bottom - top}`} preserveAspectRatio="none" className="h-0 w-full flex-1">
        {ticks.map(([y, label]) => (
          <g key={y}>
            <path d={`M1837 ${y + 0.5}h5`} stroke="#fff" shapeRendering="crispEdges" />
            <text x="1844" y={y + 7} fontSize="20" fill="#fff">
              {label}
            </text>
          </g>
        ))}
        {tags.map(([y, label, color]) => (
          <g key={y}>
            <rect x="1837" y={y} width="81" height="23" fill={color} />
            <text x="1845" y={y + 19} fontSize="20" fill="#000">
              {label}
            </text>
          </g>
        ))}
      </svg>
    </div>
  );
}

const PRICE_Y = [54, 112, 171, 230, 288, 347, 406];
const PRICE_LABELS = ['3880', '3860', '3840', '3820', '3800', '3780', '3760'];
const MACD_TICKS: Tick[] = [[46, '6.00'], [65, ''], [85, '2.00'], [104, ''], [123, '-2.00'], [142, ''], [162, '-6.00'], [181, ''], [200, '-10.00']];
const CCI_TICKS: Tick[] = [[248, '150.00'], [272, ''], [296, '50.00'], [321, ''], [345, '-50.00'], [369, ''], [394, '-150.00'], [418, '']];

// [x, label y, direction, arrow top, trigger x, trigger y]
const SIGNALS: [number, number, 1 | -1, number, number, number][] = [
  [282, 111, 1, 80, 278, 71],
  [398, 87, -1, 97, 395, 124],
  [610, 126, 1, 95, 605, 86],
  [875, 99, -1, 109, 870, 131],
  [1250, 291, 1, 261, 1246, 254],
  [1530, 375, -1, 385, 1526, 406],
];

function PricePanel() {
  return (
    <div className="flex min-w-0 flex-col pt-px">
      <Legend items={PRICE_LEGEND} />
      <Plot top={19} bottom={469}>
        <Sessions top={19} bottom={465} />
        <Stroke d="M85 225.500H1670" color="#008080" />
        <Stroke d={line(parse(VELO_TEAL))} color="#008080" />
        <Stroke d={smooth(parse(VELO_RED))} color="#ff0000" dash="3 4" />
        <Stroke d={smooth(parse(VELO_BLUE))} color="#0000ff" />
        {HILOW_RED.map((s) => (
          <Stroke key={s} d={dots(perBar(parse(s)))} color="#ff0000" width={4} />
        ))}
        {HILOW_GREEN.map((s) => (
          <Stroke key={s} d={dots(perBar(parse(s)))} color="#00ff00" width={4} />
        ))}
        <Stroke d={line(closePts)} color="#6464ff" />
        <Stroke d={dots(closePts)} color="#00ffff" width={4} />
        {SIGNALS.map(([x, ly, dir, ay, tx, ty]) => (
          <g key={x} fill={dir === 1 ? '#00ff00' : '#ff0000'}>
            <path d={`M${tx - 1} ${ty - 4}l5 4l-5 4z`} />
            {dir === 1 ? (
              <path d={`M${x + 0.5} ${ay}l3.500 6h-2v8h-3v-8h-2z`} />
            ) : (
              <path d={`M${x - 1} ${ay}h3v9h2l-3.500 7l-3.500-7h2z`} />
            )}
            <text x={x} y={ly} textAnchor="middle" fontSize="16" fill="#fff">
              {dir}
            </text>
          </g>
        ))}
      </Plot>
    </div>
  );
}

function MacdPanel() {
  return (
    <div className="flex min-w-0 flex-col">
      <Legend items={MACD_LEGEND} />
      <Plot top={27} bottom={226}>
        <Sessions top={27} bottom={225} />
        <Stroke d="M85 27.500H1670M85 181.500H1670" color="#ff0000" />
        <Stroke d="M85 65.500H1670M85 142.500H1670" color="#6a6a00" />
        <Stroke d="M85 104.500H1670" color="#0000ff" dash="3 3" />
        <Stroke d="M85 116.500H1670" color="#800080" />
        <Stroke d={smooth(parse(MACD_TEAL))} color="#008080" />
        <Stroke d={smooth(parse(MACD_YELLOW))} color="#ffff00" />
        <Stroke d={smooth(parse(MACD_YELLOW_DASH))} color="#ffff00" dash="3 4" />
        <Stroke d={line(parse(MACD_CYAN))} color="#00ffff" />
      </Plot>
    </div>
  );
}

function CciPanel() {
  return (
    <div className="flex min-w-0 flex-col">
      <Legend items={CCI_LEGEND} />
      <Plot top={244} bottom={439}>
        <defs>
          <clipPath id="overbought">
            <rect x="85" y="240" width="1752" height="22" />
          </clipPath>
          <clipPath id="oversold">
            <rect x="85" y="379" width="1752" height="61" />
          </clipPath>
        </defs>
        <Stroke d={cciBars} color="#3c3c3c" />
        <Sessions top={244} bottom={439} />
        <Stroke d="M85 262.500H1670M85 378.500H1670" color="#808080" />
        <Stroke d="M85 344.500H1670" color="#008080" />
        <Stroke d={line(parse(CCI_TEAL))} color="#008080" />
        <Stroke d={smooth(cciRed)} color="#ff0000" dash="4 4" />
        <Stroke d={smooth(parse(CCI_BLUE))} color="#0000ff" />
        <Stroke d={line(parse(STOC))} color="#c06400" dash="3 3" />
        <Stroke d={line(parse(CCI))} color="#a0a0a0" />
        <g clipPath="url(#overbought)">
          <Stroke d={line(parse(CCI))} color="#ff0000" />
        </g>
        <g clipPath="url(#oversold)">
          <Stroke d={line(parse(CCI))} color="#00ffff" />
        </g>
        {[362, 730, 1378].map((x) => (
          <circle key={x} cx={x} cy="250" r="4" fill="#00ffff" />
        ))}
        {[102, 554, 1038, 1162].map((x) => (
          <circle key={x} cx={x} cy="432" r="4" fill="#ff0000" />
        ))}
      </Plot>
    </div>
  );
}

const TIMES: [number, string][] = [
  [147, '17:00'], [215, '18:08'], [283, '19:16'], [350, '20:24'], [418, ''], [487, ''], [557, '14:48'], [622, '15:56'],
  [691, '17:04'], [759, '18:12'], [827, '19:20'], [894, '20:28'], [962, ''], [1030, ''], [1099, '14:52'], [1167, '16:00'],
  [1235, '17:08'], [1303, '18:16'], [1371, '19:24'], [1438, '20:32'], [1506, ''], [1574, ''], [1643, '14:56'],
  [1711, '16:04'], [1779, '17:12'],
];
const DAYS: [number, string][] = [[450, '7/12'], [990, '7/13'], [1530, '7/14']];

function TimeAxis() {
  return (
    <div className="col-span-3 flex">
      <svg viewBox="2 989 1917 29" preserveAspectRatio="none" className="h-full w-full" fontSize="20" fill="#fff">
        <path d="M2 989.500H1837" stroke="#fff" shapeRendering="crispEdges" />
        {TIMES.map(([x, label]) => (
          <g key={x}>
            <path d={`M${x - 0.5} 990v4`} stroke="#fff" shapeRendering="crispEdges" />
            <text x={x} y="1013">{label}</text>
          </g>
        ))}
        {DAYS.map(([x, label]) => (
          <g key={x}>
            <path d={`M${x + 0.5} 990v10`} stroke="#fff" shapeRendering="crispEdges" />
            <text x={x + 7} y="1013">{label}</text>
          </g>
        ))}
      </svg>
    </div>
  );
}

// ---------------------------------------------------------------------------
// Window frame
// ---------------------------------------------------------------------------

function MdiButtons() {
  return (
    <div className="flex gap-px bg-[#9aacbf] p-px">
      <button aria-label="Minimize child" className="flex h-6 w-[23px] items-end justify-center border border-white bg-[#dce9f7] pb-[7px]">
        <span className="h-[2px] w-[5px] bg-[#5d7186]" />
      </button>
      <button aria-label="Restore child" className="flex h-6 w-[23px] items-center justify-center border border-white bg-[#dce9f7]">
        <svg viewBox="0 0 8 8" className="h-2 w-2" shapeRendering="crispEdges">
          <path d="M2.500 2V.5h5v4H6M2 1h6M.5 3.500h5v4h-5zM0 4h6" fill="none" stroke="#5d7186" />
        </svg>
      </button>
      <button aria-label="Close child" className="flex h-6 w-[23px] items-center justify-center border border-white bg-[#dce9f7]">
        <svg viewBox="0 0 8 8" className="h-2 w-2">
          <path d="M1 1l6 6M7 1l-6 6" stroke="#5d7186" strokeWidth="2" />
        </svg>
      </button>
    </div>
  );
}

function TitleBar() {
  return (
    <header className="flex h-7 shrink-0 items-start overflow-hidden border-b border-[#3c4a5c] bg-[linear-gradient(90deg,#8fa5bd_0%,#b9cbdd_10%,#9fb6cc_21%,#8ca9c6_33%,#9cc3e8_36%,#a9cdee_60%,#b4d7f7_74%,#aed4f5_77%,#1f4266_78.500%,#1a3a5c_90%,#24486c_100%)]">
      <svg viewBox="0 0 18 22" className="mt-1 ml-0.5 h-[22px] w-4">
        <path d="M1 9C2 2 11-1 14 4c3 5 0 8 1 12l-4-2c-1-4 1-6-1-8-3-1-4 3-2 6l-1 6-3-3z" fill="#1560e8" />
        <path d="M3 9c2-5 7-6 9-3" fill="none" stroke="#7cc0ff" />
        <path d="M7 11l1 6-4 4-1-4z" fill="#0a2f8f" />
      </svg>
      <h1 className="ml-[7px] shrink-0 pt-[5px] font-['Open_Sans',sans-serif] text-sm leading-[20px] whitespace-pre text-black">
        TradeStation 8.1 - SP500_NASDAQ - SP500 Giornaliero - [Chart Analysis - GS:S&amp;P500  4 min  [CME] S&amp;P500 FUT]
      </h1>
      <div className="mr-[3px] ml-auto flex h-[25px] shrink-0 overflow-hidden rounded-b-md border border-t-0 border-[#101c2a] shadow-[0_0_0_1px_#8fa8c0]">
        <button aria-label="Minimize" className="flex w-[38px] items-end justify-center border-r border-[#20303f] bg-[linear-gradient(#9aa9b9_0%,#6d8196_48%,#2b4159_50%,#4b6680_100%)] pb-1">
          <span className="h-[5px] w-[17px] rounded-[1px] border border-[#44505e] bg-white" />
        </button>
        <button aria-label="Restore" className="flex w-9 items-center justify-center border-r border-[#20303f] bg-[linear-gradient(#9aa9b9_0%,#6d8196_48%,#2b4159_50%,#4b6680_100%)]">
          <svg viewBox="0 0 20 18" className="h-[18px] w-5">
            <path d="M6 1h12v11H6z" fill="#fff" stroke="#44505e" />
            <path d="M2 5h12v11H2z" fill="#fff" stroke="#44505e" />
            <path d="M6 9h4v3H6z" fill="#5d7186" stroke="#44505e" />
          </svg>
        </button>
        <button aria-label="Close" className="flex w-[62px] items-center justify-center bg-[linear-gradient(#e8a598_0%,#cf6a55_48%,#b02a12_50%,#d8623c_100%)]">
          <svg viewBox="0 0 18 16" className="h-4 w-[18px]">
            <path d="M1 1h5l3 4 3-4h5l-5 7 5 7h-5l-3-4-3 4H1l5-7z" fill="#fff" stroke="#4a3a3e" />
          </svg>
        </button>
      </div>
    </header>
  );
}

const MENUS = ['File', 'Edit', 'View', 'Insert', 'Format', 'Drawing', 'Window', 'Help'];

function MenuBar() {
  return (
    <nav className="flex h-[29px] shrink-0 items-end border-b border-[#8e95a3] bg-[linear-gradient(#fff_0%,#eef1f9_30%,#d5dcee_34%,#e2e7f5_100%)] font-['Open_Sans',sans-serif] text-sm">
      <svg viewBox="0 0 19 17" className="mr-2 mb-[5px] ml-[7px] h-[17px] w-[19px]" shapeRendering="crispEdges">
        <path d="M0 0h19v17H0z" fill="#000" />
        <path d="M0 0h19v3H0z" fill="#0000d0" />
        <path d="M1 10l2-3l2 3l2-4l3 3l2-4l3 2l2-4" stroke="#00a000" fill="none" />
        <path d="M1 13.500h17" stroke="#a00000" />
        <path d="M1 15l3-1l4 1l4-1l5 1" stroke="#00a000" fill="none" />
      </svg>
      <div className="flex gap-[15px] pb-[3px] leading-5">
        {MENUS.map((m) => (
          <button key={m}>{m}</button>
        ))}
      </div>
      <div className="ml-auto">
        <MdiButtons />
      </div>
    </nav>
  );
}

function Toolbar() {
  return (
    <div className="flex h-[33px] shrink-0 items-center overflow-hidden border-b-2 border-[#7c7c7c] bg-[#f0f0f0] pt-0.5 pl-1.5">
      <div className="flex w-[520px] shrink-0 items-center">
        <Grip />
        <ToolGroup items={FILE_TOOLS} />
        <span className="relative flex">
          <select aria-label="Symbol" className="h-6 w-[137px] appearance-none border border-[#d0d4da] bg-white" />
          <svg viewBox="0 0 9 5" className="pointer-events-none absolute top-[10px] right-[6px] h-[5px] w-[9px]">
            <path d="M0 0h9L4.500 5z" />
          </svg>
        </span>
        <button aria-label="Next" className="flex w-[18px] justify-center">
          <svg viewBox="0 0 5 10" className="h-[10px] w-[5px]">
            <path d="M0 0l5 5l-5 5z" />
          </svg>
        </button>
        <span className="w-2" />
        <ToolButton name="find" />
      </div>
      <Grip />
      <div className="flex w-[591px] shrink-0 items-center">
        <ToolGroup items={CHART_TOOLS} />
      </div>
      <Grip />
      <ToolGroup items={DRAW_TOOLS} />
      <button className="px-0.5 text-xs">abc</button>
    </div>
  );
}

const TABS: [string, string][] = [
  ['SP500 100', 'w-[75px]'],
  ['SP500 TF240', 'w-[89px]'],
  ['SP500_TF120', 'w-[93px]'],
  ['SP500_TF60', 'w-[87px]'],
  ['SP500_TF30', 'w-[86px]'],
  ['SP500 Frame Bassi', 'w-[125px]'],
  ['SP500 Giornaliero', 'w-[116px]'],
  ['ANNUALE Indici_2', 'w-[114px]'],
  ['No PREZZI 1', 'w-[85px]'],
];

function WorkspaceTabs() {
  const [active, setActive] = useState(6);
  const nav = ['M3 3v8M9 3v8l-4-4z', 'M8 3v8l-4-4z', 'M5 3v8l4-4z', 'M10 3v8M4 3v8l4-4z'];
  return (
    <div className="flex h-[19px] shrink-0 overflow-hidden border-t border-b border-t-black border-b-[#8c8c8c] bg-[#f0f0f0]">
      {nav.map((d) => (
        <button key={d} aria-label="Scroll tabs" className="mt-px h-4 w-[17px] border border-[#a8a8a8] border-t-white border-l-white">
          <svg viewBox="0 0 14 14" className="h-[14px] w-[14px]">
            <path d={d} fill="#707070" stroke="#707070" />
          </svg>
        </button>
      ))}
      <svg viewBox="0 0 7 17" className="h-[17px] w-[7px] shrink-0">
        <path d="M2 0l4 16.500h1" fill="none" stroke="#000" />
      </svg>
      {TABS.map(([label, width], i) => (
        <div key={label} className="flex shrink-0">
          <button
            onClick={() => setActive(i)}
            className={`${width} h-[17px] border-b border-black text-center text-xs leading-4 whitespace-nowrap ${i === active ? 'bg-white font-bold' : ''}`}
          >
            {label}
          </button>
          <svg viewBox="0 0 8 17" className="h-[17px] w-2 shrink-0">
            {i === active && <path d="M0 0h6l-5 17h-1z" fill="#fff" />}
            {i + 1 === active && <path d="M2 0h6v17h-2z" fill="#fff" />}
            {i === active || i === TABS.length - 1 ? (
              <path d="M6 0l-5 16.500h-1M5 9l2 7.500h1" fill="none" stroke="#000" strokeDasharray={i === TABS.length - 1 ? '18.500 99' : undefined} />
            ) : (
              <path d="M2 0l4.500 16.500h1.500M4 9l-3 7.500h-1" fill="none" stroke="#000" />
            )}
          </svg>
        </div>
      ))}
    </div>
  );
}

const STATUS: [string, string][] = [
  ['Acct:', 'w-[50px]'],
  ['Open Psns:', 'w-[91px]'],
  ['DT BP:', 'w-[63px]'],
  ['Purch Pwr:', 'w-[87px]'],
  ['Closed P/L:', 'w-[93px]'],
  ['RT TE:', 'w-[60px]'],
  ['Open P/L:', 'w-[84px]'],
];

function StatusBar() {
  return (
    <footer className="flex h-5 shrink-0 items-center border-b border-[#4f6a8a] bg-[#f0eded] pl-0.5 font-['Open_Sans',sans-serif] text-sm leading-[19px] whitespace-nowrap">
      <span className="mr-auto">For Help, press F1</span>
      {STATUS.map(([label, width]) => (
        <span key={label} className={`${width} border-r border-[#cfcaca] pl-1`}>
          {label}
        </span>
      ))}
      <span className="w-[89px] border-r border-[#cfcaca] pl-1 text-[#1a8a1a]">ORDER BAR</span>
      <span className="w-[68px] border-r border-[#cfcaca] pl-1 text-[#1a8a1a]">MACROS</span>
      <svg viewBox="0 0 18 14" className="h-[14px] w-[18px]">
        <circle cx="8" cy="6" r="5" fill="#d00000" stroke="#300000" />
        <circle cx="6" cy="4" r="1" fill="#fff" />
      </svg>
      <span className="w-[124px] border-l border-[#cfcaca] pl-1">14/07/2022 15:20</span>
    </footer>
  );
}

export default function App() {
  return (
    <div className="flex h-screen min-h-[640px] flex-col overflow-hidden bg-black font-['Liberation_Sans',Arial,sans-serif] text-black">
      <TitleBar />
      <MenuBar />
      <Toolbar />

      <main className="relative min-h-0 flex-1 overflow-hidden border-r border-l-2 border-r-[#c0c0c0] border-l-[#808080] bg-[#030305]">
        <div className="grid h-full grid-cols-[83px_minmax(0,1fr)_83px] grid-rows-[469fr_217fr_213fr_29px]">
          <LeftAxis top={0} bottom={468} ticks={PRICE_Y.map((y, i) => [y, PRICE_LABELS[i] + '....'])} />
          <PricePanel />
          <RightAxis
            top={0}
            bottom={468}
            ticks={PRICE_Y.map((y, i) => [y, i === 5 ? '' : PRICE_LABELS[i] + '.00'])}
            tags={[[337, '3780.50', '#ff0000'], [422, '3751.50', '#6464ff']]}
          />

          <LeftAxis top={9} bottom={225} ticks={MACD_TICKS} />
          <MacdPanel />
          <RightAxis
            top={9}
            bottom={225}
            ticks={MACD_TICKS.filter((t) => t[1])}
            tags={[
              [18, '8.00', '#ff0000'],
              [56, '4.00', '#6a6a00'],
              [95, '0.00', '#0000ff'],
              [133, '-4.00', '#6a6a00'],
              [172, '-8.00', '#ff0000'],
              [144, '-5.11', '#00ffff'],
            ]}
          />

          <LeftAxis top={226} bottom={438} ticks={CCI_TICKS} />
          <CciPanel />
          <RightAxis
            top={226}
            bottom={438}
            ticks={CCI_TICKS}
            tags={[[253, '120.00', '#808080'], [369, '-120.00', '#808080'], [353, '-85.98', '#a0a0a0']]}
          />

          <TimeAxis />
        </div>
        <div className="absolute top-2 -right-[10px]">
          <MdiButtons />
        </div>
      </main>

      <div className="flex h-[23px] shrink-0 items-center justify-between border-t border-[#c8c8c8] bg-[#ededed] px-[9px]">
        <button aria-label="Scroll left">
          <svg viewBox="0 0 5 9" className="h-[9px] w-[5px]">
            <path d="M5 0v9l-5-4.500z" fill="#404040" />
          </svg>
        </button>
        <div className="flex items-center gap-2">
          <button aria-label="Scroll position" className="flex h-[19px] w-[18px] items-center justify-center gap-[2px] rounded-[2px] border border-[#909090] bg-[linear-gradient(90deg,#f6f6f6,#d4d4d4)]">
            <span className="h-2 w-[2px] bg-[#707070]" />
            <span className="h-2 w-[2px] bg-[#707070]" />
            <span className="h-2 w-[2px] bg-[#707070]" />
          </button>
          <button aria-label="Scroll right">
            <svg viewBox="0 0 5 9" className="h-[9px] w-[5px]">
              <path d="M0 0v9l5-4.500z" fill="#404040" />
            </svg>
          </button>
        </div>
      </div>

      <WorkspaceTabs />
      <StatusBar />
    </div>
  );
}
